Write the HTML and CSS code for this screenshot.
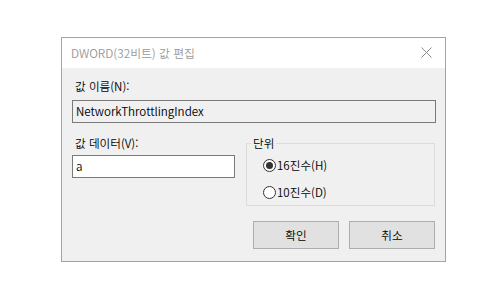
FILE: index.html
```html
<!DOCTYPE html>
<html lang="ko">
<head>
<meta charset="utf-8">
<title>DWORD(32비트) 값 편집</title>
<link rel="stylesheet" href="styles.css">
</head>
<body>
<div class="dialog">
  <div class="titlebar">
    <span class="title">DWORD(32비트) 값 편집</span>
    <svg class="close" width="11" height="11" viewBox="0 0 11 11"><path d="M0.5 0.5 L10.5 10.5 M10.5 0.5 L0.5 10.5" stroke="#8a8a8a" stroke-width="1" fill="none"/></svg>
  </div>
  <div class="content">
    <div class="label">값 이름(N):</div>
    <div class="field readonly">NetworkThrottlingIndex</div>
    <div class="columns">
      <div class="left">
        <div class="label">값 데이터(V):</div>
        <div class="field">a</div>
      </div>
      <div class="right">
        <fieldset class="group">
          <legend>단위</legend>
          <div class="radio-row"><span class="radio checked"></span><span>16진수(H)</span></div>
          <div class="radio-row"><span class="radio"></span><span>10진수(D)</span></div>
        </fieldset>
        <div class="buttons">
          <div class="button">확인</div>
          <div class="button">취소</div>
        </div>
      </div>
    </div>
  </div>
</div>
</body>
</html>
```
FILE: styles.css
```css
html, body {
  margin: 0;
  padding: 0;
  background: #ffffff;
}
body {
  padding: 37px 0 0 61px;
  font-family: "Noto Sans CJK KR", "Noto Sans", sans-serif;
  font-size: 11.6px;
  font-weight: 350;
  line-height: 16px;
  color: #000;
}
.dialog {
  width: 383px;
  height: 223px;
  border: 1px solid #a3a3a3;
  background: #f0f0f0;
  display: flex;
  flex-direction: column;
}
.titlebar {
  height: 30px;
  background: #ffffff;
  display: flex;
  align-items: center;
  padding: 0 10px 0 9px;
}
.title {
  flex: 1;
  color: #999999;
  font-size: 11.8px;
}
.close {
  margin-right: 3px;
  margin-top: -1px;
}
.content {
  padding: 10px 9px 0 10px;
}
.label {
  height: 16px;
  padding-left: 3px;
}
.field {
  height: 21px;
  border: 1px solid #7a7a7a;
  background: #ffffff;
  line-height: 21px;
  padding-left: 3px;
  margin-top: 6px;
}
.field.readonly {
  background: #f0f0f0;
}
.columns {
  display: flex;
  gap: 11px;
  margin-top: 12px;
}
.left {
  width: 163px;
}
.left .field {
  margin-top: 4px;
}
.right {
  width: 189px;
}
.group {
  margin: 0;
  border: 1px solid #dcdcdc;
  padding: 6px 0 5px 4px;
}
.group legend {
  padding: 0 2px;
  line-height: 16px;
}
.radio-row {
  display: flex;
  align-items: center;
  height: 16px;
  margin-left: 12px;
}
.radio-row + .radio-row {
  margin-top: 11px;
}
.radio {
  width: 11px;
  height: 11px;
  border: 1px solid #333333;
  border-radius: 50%;
  background: #ffffff;
  margin-right: 1px;
  position: relative;
}
.radio.checked::after {
  content: "";
  position: absolute;
  left: 2px;
  top: 2px;
  width: 7px;
  height: 7px;
  border-radius: 50%;
  background: #333333;
}
.buttons {
  display: flex;
  justify-content: flex-end;
  gap: 10px;
  margin-top: 15px;
}
.button {
  width: 84px;
  height: 26px;
  border: 1px solid #adadad;
  background: #e1e1e1;
  display: flex;
  align-items: center;
  justify-content: center;
}
```
